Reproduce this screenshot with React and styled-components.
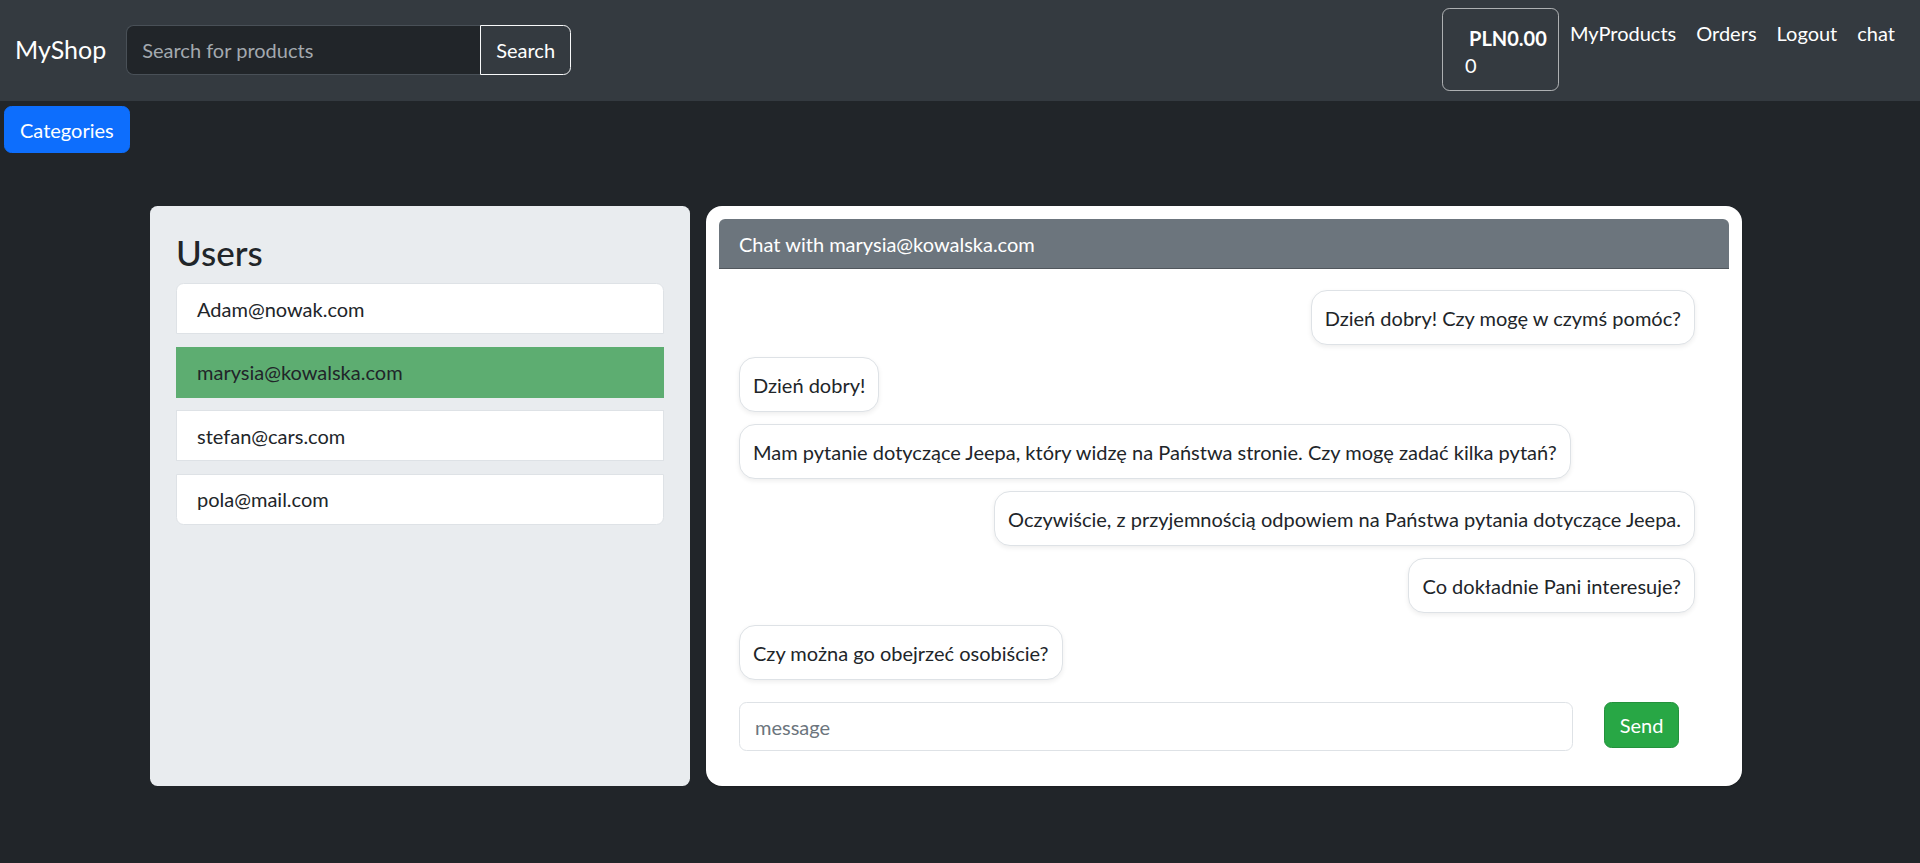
import React from "react";
import styled, { createGlobalStyle } from "styled-components";

const GlobalStyle = createGlobalStyle`
  * { box-sizing: border-box; }
  html, body { margin: 0; padding: 0; }
  body {
    background: #212529;
    font-family: "Lato", "Noto Sans", sans-serif;
    font-size: 20px;
    line-height: 30px;
    color: #dee2e6;
    min-height: 100vh;
  }
  input, button { font-family: inherit; }
`;

const Page = styled.div`
  min-height: 863px;
  background: #212529;
`;

const Navbar = styled.nav`
  display: flex;
  align-items: center;
  padding: 8px 15px 10px 15px;
  background: #343a40;
`;

const Brand = styled.a`
  font-size: 25px;
  line-height: 37px;
  color: #fff;
  text-decoration: none;
  margin-right: 20px;
`;

const SearchForm = styled.form`
  display: flex;
  align-items: stretch;
  margin: 0;
`;

const SearchInput = styled.input`
  width: 354px;
  height: 50px;
  padding: 7px 15px;
  font-size: 20px;
  color: #dee2e6;
  background: #212529;
  border: 1px solid #495057;
  border-right: none;
  border-radius: 7.5px 0 0 7.5px;
  outline: none;
  &::placeholder { color: #a3a9af; }
`;

const OutlineLightButton = styled.button`
  height: 50px;
  padding: 0 15px;
  font-size: 20px;
  color: #fff;
  background: transparent;
  border: 1.25px solid #f8f9fa;
  border-radius: 0 7.5px 7.5px 0;
`;

const RightNav = styled.div`
  margin-left: auto;
  display: flex;
  align-items: flex-start;
  align-self: stretch;
`;

const CartBox = styled.div`
  display: flex;
  flex-direction: column;
  align-items: flex-start;
  width: 117px;
  height: 83px;
  padding: 16px 12px 10px 22px;
  border: 1.25px solid rgba(255, 255, 255, 0.6);
  border-radius: 7.5px;
  color: #fff;
  line-height: 27px;
  margin-right: 1px;
`;

const CartTotal = styled.strong`
  font-weight: 700;
  margin-left: 4px;
`;

const NavLink = styled.a`
  padding: 10px 10px;
  color: #fff;
  text-decoration: none;
  line-height: 30px;
`;

const CategoriesButton = styled.button`
  margin: 5px 0 0 4px;
  height: 47px;
  padding: 0 15px;
  font-size: 20px;
  color: #fff;
  background: #0d6efd;
  border: 1.25px solid #0d6efd;
  border-radius: 7.5px;
`;

const Content = styled.main`
  display: flex;
  align-items: stretch;
  gap: 16px;
  margin: 53px 0 0 150px;
  width: 1592px;
`;

const UsersPanel = styled.section`
  width: 540px;
  flex: none;
  background: #e9ecef;
  border-radius: 7.5px;
  padding: 25px 26px;
`;

const UsersTitle = styled.h3`
  margin: 0 0 10px;
  font-size: 35px;
  line-height: 42px;
  font-weight: 500;
  color: #212529;
`;

const UserList = styled.div`
  display: flex;
  flex-direction: column;
  gap: 12.5px;
`;

const UserItem = styled.div`
  padding: 9.5px 20px;
  height: 51px;
  color: #212529;
  background: ${(p) => (p.$active ? "#5dad71" : "#fff")};
  border: 1px solid ${(p) => (p.$active ? "#5dad71" : "#dee2e6")};
  border-radius: ${(p) =>
    p.$first ? "7.5px 7.5px 0 0" : p.$last ? "0 0 7.5px 7.5px" : "0"};
`;

const ChatCard = styled.section`
  flex: 1;
  display: flex;
  flex-direction: column;
  background: #fff;
  border-radius: 16px;
  padding: 13px;
  box-shadow: 0 1px 2px rgba(0, 0, 0, 0.2);
`;

const ChatHeader = styled.div`
  height: 50px;
  padding: 10px 20px 9px;
  background: #6c757d;
  color: #fff;
  border-bottom: 1px solid rgba(0, 0, 0, 0.25);
  border-radius: 6px 6px 0 0;
`;

const ChatBody = styled.div`
  display: flex;
  flex-direction: column;
  padding: 21px 20px 22px;
`;

const Messages = styled.div`
  display: flex;
  flex-direction: column;
  gap: 12px;
`;

const Bubble = styled.div`
  align-self: ${(p) => (p.$mine ? "flex-end" : "flex-start")};
  margin-right: ${(p) => (p.$mine ? "14px" : "0")};
  padding: 11.5px 13px;
  color: #212529;
  background: #fff;
  border: 1px solid #dee2e6;
  border-radius: 16px;
  box-shadow: 0 2px 5px rgba(0, 0, 0, 0.07);
  white-space: nowrap;
`;

const Composer = styled.form`
  display: flex;
  align-items: flex-start;
  gap: 31px;
  margin: 22px 0 0;
`;

const MessageInput = styled.input`
  width: 834px;
  height: 49px;
  padding: 7px 15px;
  font-size: 20px;
  color: #212529;
  background: #fff;
  border: 1px solid #dee2e6;
  border-radius: 7.5px;
  outline: none;
  &::placeholder { color: #6c757d; }
`;

const SendButton = styled.button`
  width: 75px;
  height: 46px;
  padding: 0;
  font-size: 20px;
  color: #fff;
  background: #28a745;
  border: 1.25px solid #23913c;
  border-radius: 7.5px;
`;

const users = ["Adam@nowak.com", "marysia@kowalska.com", "stefan@cars.com", "pola@mail.com"];

const messages = [
  { mine: true, text: "Dzień dobry! Czy mogę w czymś pomóc?" },
  { mine: false, text: "Dzień dobry!" },
  { mine: false, text: "Mam pytanie dotyczące Jeepa, który widzę na Państwa stronie. Czy mogę zadać kilka pytań?" },
  { mine: true, text: "Oczywiście, z przyjemnością odpowiem na Państwa pytania dotyczące Jeepa." },
  { mine: true, text: "Co dokładnie Pani interesuje?" },
  { mine: false, text: "Czy można go obejrzeć osobiście?" },
];

export default function App() {
  return (
    <Page>
      <GlobalStyle />
      <Navbar>
        <Brand href="#">MyShop</Brand>
        <SearchForm onSubmit={(e) => e.preventDefault()}>
          <SearchInput placeholder="Search for products" />
          <OutlineLightButton type="submit">Search</OutlineLightButton>
        </SearchForm>
        <RightNav>
          <CartBox>
            <CartTotal>PLN0.00</CartTotal>
            <span>0</span>
          </CartBox>
          <NavLink href="#">MyProducts</NavLink>
          <NavLink href="#">Orders</NavLink>
          <NavLink href="#">Logout</NavLink>
          <NavLink href="#">chat</NavLink>
        </RightNav>
      </Navbar>
      <CategoriesButton>Categories</CategoriesButton>
      <Content>
        <UsersPanel>
          <UsersTitle>Users</UsersTitle>
          <UserList>
            {users.map((u, i) => (
              <UserItem
                key={u}
                $active={u === "marysia@kowalska.com"}
                $first={i === 0}
                $last={i === users.length - 1}
              >
                {u}
              </UserItem>
            ))}
          </UserList>
        </UsersPanel>
        <ChatCard>
          <ChatHeader>Chat with marysia@kowalska.com</ChatHeader>
          <ChatBody>
            <Messages>
              {messages.map((m, i) => (
                <Bubble key={i} $mine={m.mine}>
                  {m.text}
                </Bubble>
              ))}
            </Messages>
            <Composer onSubmit={(e) => e.preventDefault()}>
              <MessageInput placeholder="message" />
              <SendButton type="submit">Send</SendButton>
            </Composer>
          </ChatBody>
        </ChatCard>
      </Content>
    </Page>
  );
}
